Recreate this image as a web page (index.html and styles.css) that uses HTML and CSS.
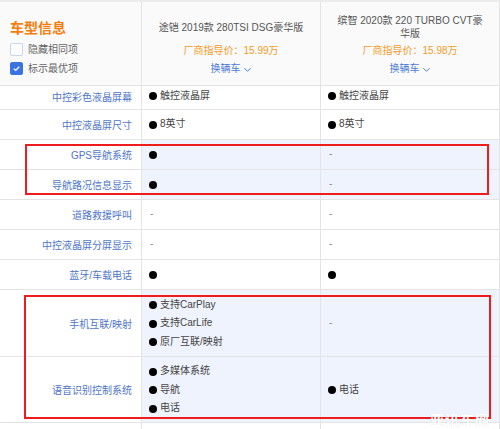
FILE: index.html
```html
<!DOCTYPE html>
<html lang="zh">
<head>
<meta charset="utf-8">
<link rel="stylesheet" href="styles.css">
</head>
<body>
<div class="page">
  <div class="topstrip"></div>
  <div class="row head">
    <div class="cell hcell-left">
      <div class="title">车型信息</div>
      <label class="opt"><span class="box"></span>隐藏相同项</label>
      <label class="opt"><span class="box checked"><svg viewBox="0 0 14 14" width="13" height="13"><path d="M3.5 7.2 L6 9.5 L10.5 4.8" fill="none" stroke="#fff" stroke-width="1.6"/></svg></span>标示最优项</label>
    </div>
    <div class="cell hcell">
      <div class="car">途铠 2019款 280TSI DSG豪华版</div>
      <div class="price">厂商指导价：15.99万</div>
      <div class="switch">换辆车<svg viewBox="0 0 10 10" width="9" height="9"><path d="M1.5 3.5 L5 7 L8.5 3.5" fill="none" stroke="#4a7bd8" stroke-width="1.1"/></svg></div>
    </div>
    <div class="cell hcell">
      <div class="car">缤智 2020款 220 TURBO CVT豪华版</div>
      <div class="price">厂商指导价：15.98万</div>
      <div class="switch">换辆车<svg viewBox="0 0 10 10" width="9" height="9"><path d="M1.5 3.5 L5 7 L8.5 3.5" fill="none" stroke="#4a7bd8" stroke-width="1.1"/></svg></div>
    </div>
  </div>

  <div class="row r24">
    <div class="cell label">中控彩色液晶屏幕</div>
    <div class="cell val"><div class="item"><span class="dot"></span>触控液晶屏</div></div>
    <div class="cell val"><div class="item"><span class="dot"></span>触控液晶屏</div></div>
  </div>
  <div class="row">
    <div class="cell label">中控液晶屏尺寸</div>
    <div class="cell val"><div class="item"><span class="dot"></span>8英寸</div></div>
    <div class="cell val"><div class="item"><span class="dot"></span>8英寸</div></div>
  </div>
  <div class="row diff">
    <div class="cell label">GPS导航系统</div>
    <div class="cell val"><div class="item"><span class="dot"></span></div></div>
    <div class="cell val"><div class="item dash">-</div></div>
  </div>
  <div class="row diff">
    <div class="cell label">导航路况信息显示</div>
    <div class="cell val"><div class="item"><span class="dot"></span></div></div>
    <div class="cell val"><div class="item dash">-</div></div>
  </div>
  <div class="row">
    <div class="cell label">道路救援呼叫</div>
    <div class="cell val"><div class="item dash">-</div></div>
    <div class="cell val"><div class="item dash">-</div></div>
  </div>
  <div class="row">
    <div class="cell label">中控液晶屏分屏显示</div>
    <div class="cell val"><div class="item dash">-</div></div>
    <div class="cell val"><div class="item dash">-</div></div>
  </div>
  <div class="row">
    <div class="cell label">蓝牙/车载电话</div>
    <div class="cell val"><div class="item"><span class="dot"></span></div></div>
    <div class="cell val"><div class="item"><span class="dot"></span></div></div>
  </div>
  <div class="row diff r67">
    <div class="cell label">手机互联/映射</div>
    <div class="cell val">
      <div class="item"><span class="dot"></span>支持CarPlay</div>
      <div class="item"><span class="dot"></span>支持CarLife</div>
      <div class="item"><span class="dot"></span>原厂互联/映射</div>
    </div>
    <div class="cell val"><div class="item dash">-</div></div>
  </div>
  <div class="row diff r66">
    <div class="cell label">语音识别控制系统</div>
    <div class="cell val">
      <div class="item"><span class="dot"></span>多媒体系统</div>
      <div class="item"><span class="dot"></span>导航</div>
      <div class="item"><span class="dot"></span>电话</div>
    </div>
    <div class="cell val"><div class="item"><span class="dot"></span>电话</div></div>
  </div>
  <div class="row">
    <div class="cell label"></div>
    <div class="cell val"></div>
    <div class="cell val"></div>
  </div>

  <div class="mark mark1"></div>
  <div class="mark mark2"></div>
  <div class="watermark">亚讯车网</div>
</div>
</body>
</html>
```

FILE: styles.css
```css
html, body {
  margin: 0;
  padding: 0;
  background: #fff;
}
body {
  font-family: "Liberation Sans", "Noto Sans CJK SC", sans-serif;
  font-size: 10px;
  color: #333;
  overflow: hidden;
  width: 500px;
  height: 429px;
}
.page {
  position: relative;
  width: 500px;
  height: 429px;
  overflow: hidden;
}
.topstrip {
  height: 2px;
  background: #ececec;
}
.row {
  display: grid;
  grid-template-columns: 142px 179px 179px;
  height: 30px;
}
.row.head { height: 84px; background: #fafafa; }
.row.r24 { height: 24px; }
.row.r67 { height: 67px; }
.row.r66 { height: 66px; }
.cell {
  box-sizing: border-box;
  border-right: 1px solid #e4e4e4;
  border-bottom: 1px solid #e4e4e4;
  min-width: 0;
}
.hcell-left {
  padding: 15px 0 0 10px;
}
.title {
  color: #f77d0a;
  font-size: 14px;
  font-weight: bold;
  line-height: 20px;
  margin-bottom: 3px;
  font-family: "Noto Sans CJK SC", sans-serif;
}
.opt {
  display: flex;
  align-items: center;
  gap: 5px;
  color: #666;
  height: 19px;
  line-height: 19px;
}
.box {
  width: 11px;
  height: 11px;
  border: 1px solid #c9d5ee;
  background: #fff;
  border-radius: 2px;
  display: flex;
  align-items: center;
  justify-content: center;
}
.box.checked {
  background: #3b74e2;
  border-color: #3b74e2;
}
.hcell {
  display: flex;
  flex-direction: column;
  align-items: center;
  padding: 11px 15px 0;
  text-align: center;
}
.car {
  height: 28px;
  display: flex;
  align-items: center;
  justify-content: center;
  line-height: 13px;
  color: #555;
}
.price {
  color: #f39a1e;
  line-height: 18px;
  margin-top: 1px;
}
.switch {
  color: #4a7bd8;
  line-height: 18px;
  display: flex;
  align-items: center;
  gap: 2px;
}
.label {
  display: flex;
  align-items: center;
  justify-content: flex-end;
  padding-right: 9px;
  color: #4f76c8;
  background: #fff;
}
.r24 .label, .r24 .val { padding-bottom: 3px; }
.val {
  display: flex;
  flex-direction: column;
  justify-content: center;
  padding-left: 7px;
  color: #444;
}
.diff .val { background: #eff3fd; }
.r67 .val, .r66 .val { padding-top: 1px; }
.item {
  display: flex;
  align-items: center;
  line-height: 18.5px;
}
.dot {
  width: 8px;
  height: 8px;
  border-radius: 50%;
  background: #000;
  margin-right: 3px;
  flex: none;
}
.dash {
  color: #888;
  padding-left: 1px;
}
.mark {
  position: absolute;
  border: 2px solid #ee1c1c;
  box-sizing: border-box;
}
.mark1 {
  left: 25px;
  top: 144px;
  width: 464px;
  height: 51px;
}
.mark2 {
  left: 24px;
  top: 295px;
  width: 467px;
  height: 124px;
}
.watermark {
  position: absolute;
  right: 10px;
  bottom: 2px;
  color: #fff;
  font-size: 14px;
  line-height: 15px;
  font-weight: bold;
  letter-spacing: 1px;
  font-family: "Noto Sans CJK SC", sans-serif;
  text-shadow: 0 0 1px rgba(0,0,0,0.15);
}
```
